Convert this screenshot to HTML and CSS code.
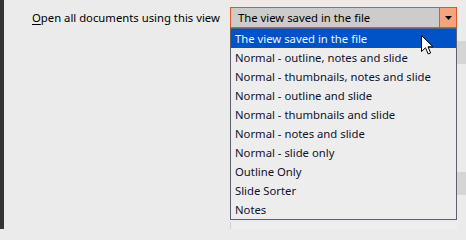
FILE: index.html
```html
<!DOCTYPE html>
<html lang="en">
<head>
<meta charset="utf-8">
<title>View options</title>
<link rel="stylesheet" href="styles.css">
</head>
<body>
  <div class="strip"></div>
  <main class="panel">
    <label class="label"><span class="mn">O</span>pen all documents using this view</label>
    <div class="combo">
      <span class="combo-text">The view saved in the file</span>
      <span class="combo-btn">
        <svg width="7" height="4" viewBox="0 0 7 4"><path d="M0 0H7L3.5 4Z" fill="#000"/></svg>
      </span>
    </div>
    <div class="side">
      <div class="side-box"></div>
      <div class="side-box"></div>
    </div>
    <div class="below"></div>
  </main>
  <ul class="popup">
    <li class="item selected">The view saved in the file</li>
    <li class="item">Normal - outline, notes and slide</li>
    <li class="item">Normal - thumbnails, notes and slide</li>
    <li class="item">Normal - outline and slide</li>
    <li class="item">Normal - thumbnails and slide</li>
    <li class="item">Normal - notes and slide</li>
    <li class="item">Normal - slide only</li>
    <li class="item">Outline Only</li>
    <li class="item">Slide Sorter</li>
    <li class="item">Notes</li>
  </ul>
  <svg class="cursor" width="13" height="20" viewBox="0 0 13 20">
    <path d="M0.5 0.5V16.5L4.5 12.8L7.2 19L9.6 18L7 11.8H12Z" fill="#fff" stroke="#000" stroke-width="1" stroke-linejoin="miter"/>
  </svg>
</body>
</html>
```

FILE: styles.css
```css
* { box-sizing: border-box; }
html, body { margin: 0; padding: 0; }
body {
  width: 466px;
  height: 229px;
  overflow: hidden;
  position: relative;
  display: flex;
  background: #ebebeb;
  font-family: "Noto Sans", "Liberation Sans", sans-serif;
  font-size: 11.3px;
  color: #000;
}
.strip {
  width: 4px;
  flex: none;
  background: #333333;
}
.panel {
  flex: 1;
  display: grid;
  grid-template-columns: 198px 227px 1fr;
  grid-template-rows: 21px auto;
  align-content: start;
  padding: 7px 0 0 28px;
}
.label {
  grid-column: 1;
  grid-row: 1;
  display: flex;
  align-items: center;
  white-space: nowrap;
  color: #000;
}
.mn { text-decoration: underline; text-underline-offset: 2px; }
.combo {
  grid-column: 2;
  grid-row: 1;
  display: flex;
  border: 1px solid #e1552a;
  background: #cccccc;
}
.combo-text {
  flex: 1;
  display: flex;
  align-items: center;
  padding-left: 7px;
  white-space: nowrap;
  color: #000;
}
.combo-btn {
  width: 17px;
  flex: none;
  display: flex;
  align-items: center;
  justify-content: center;
  border-left: 1px solid #e1552a;
  background: #f2a57e;
}
.side {
  grid-column: 3;
  grid-row: 2;
  display: flex;
  flex-direction: column;
  gap: 108px;
  padding-top: 13px;
}
.side-box {
  height: 23px;
  background: #d5d5d5;
}
.below {
  grid-column: 2;
  grid-row: 2;
  margin-top: 194px;
  height: 20px;
  background: #eeeeee;
  border-left: 1px solid #d2d2d2;
}
.popup {
  position: absolute;
  left: 230px;
  top: 28px;
  width: 227px;
  height: 192px;
  margin: 0;
  padding: 0;
  list-style: none;
  background: #ededed;
  border: 1px solid #5d6170;
}
.item {
  height: 19px;
  display: flex;
  align-items: center;
  padding-left: 4px;
  white-space: nowrap;
  color: #12122c;
}
.item.selected {
  background: #0053c7;
  color: #eef3ff;
}
.cursor {
  position: absolute;
  left: 421px;
  top: 35px;
}
```
